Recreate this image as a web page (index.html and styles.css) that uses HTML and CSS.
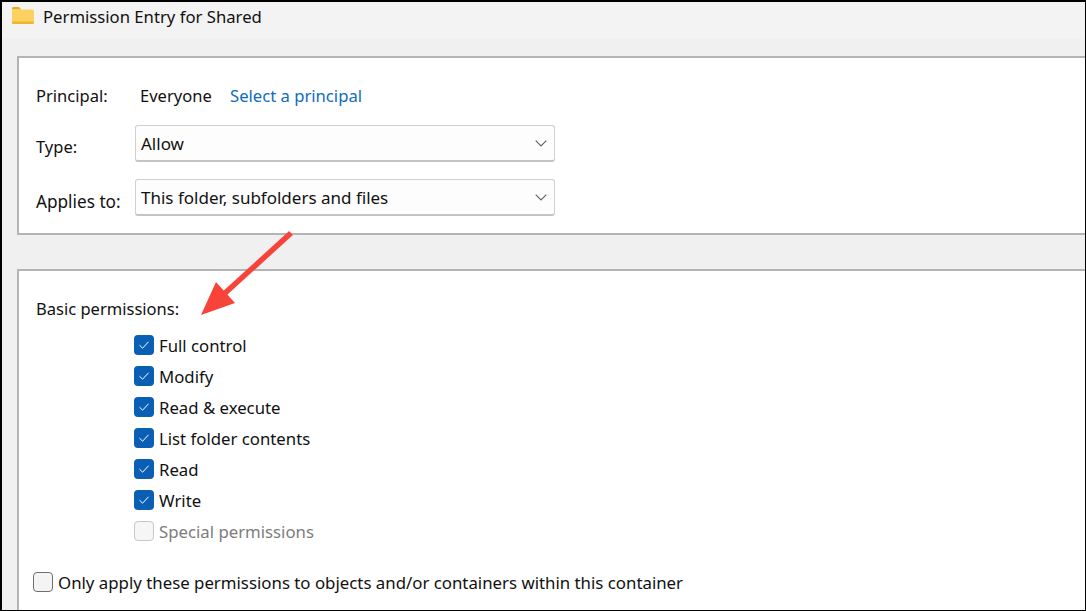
FILE: index.html
```html
<!DOCTYPE html>
<html lang="en">
<head>
<meta charset="utf-8">
<title>Permission Entry for Shared</title>
<link rel="stylesheet" href="styles.css">
</head>
<body>
<div class="window">
  <header class="titlebar">
    <svg class="folder" width="22" height="17" viewBox="0 0 22 17">
      <path d="M0 1.6C0 .7.7 0 1.6 0h4.6c.6 0 1 .2 1.3.6L9.2 2.4H0z" fill="#e8a917"/>
      <path d="M0 2.6h20.5c.8 0 1.5.7 1.5 1.5v11.3c0 .9-.7 1.6-1.5 1.6H1.5C.7 17 0 16.3 0 15.4z" fill="#fbd262"/>
      <path d="M0 14.6h22v.8c0 .9-.7 1.6-1.5 1.6H1.5C.7 17 0 16.3 0 15.4z" fill="#efb52e"/>
    </svg>
    <span class="title">Permission Entry for Shared</span>
  </header>
  <main class="content">
    <section class="panel top-panel">
      <div class="principal-row">
        <span class="label principal-label">Principal:</span>
        <span class="everyone">Everyone</span>
        <a class="link">Select a principal</a>
      </div>
      <div class="field-row type-row">
        <span class="label">Type:</span>
        <div class="select">
          <span>Allow</span>
          <svg width="12" height="7" viewBox="0 0 12 7"><path d="M.7.7 6 6l5.3-5.3" fill="none" stroke="#606060" stroke-width="1.1"/></svg>
        </div>
      </div>
      <div class="field-row applies-row">
        <span class="label">Applies to:</span>
        <div class="select">
          <span>This folder, subfolders and files</span>
          <svg width="12" height="7" viewBox="0 0 12 7"><path d="M.7.7 6 6l5.3-5.3" fill="none" stroke="#606060" stroke-width="1.1"/></svg>
        </div>
      </div>
    </section>
    <section class="panel bottom-panel">
      <div class="label basic-label">Basic permissions:</div>
      <ul class="perm-list">
        <li class="perm"><span class="box checked"><svg width="12" height="10" viewBox="0 0 12 10"><path d="M1.5 5.2 4.6 8.2 10.5 1.8" fill="none" stroke="#fff" stroke-width="1"/></svg></span>Full control</li>
        <li class="perm"><span class="box checked"><svg width="12" height="10" viewBox="0 0 12 10"><path d="M1.5 5.2 4.6 8.2 10.5 1.8" fill="none" stroke="#fff" stroke-width="1"/></svg></span>Modify</li>
        <li class="perm"><span class="box checked"><svg width="12" height="10" viewBox="0 0 12 10"><path d="M1.5 5.2 4.6 8.2 10.5 1.8" fill="none" stroke="#fff" stroke-width="1"/></svg></span>Read &amp; execute</li>
        <li class="perm"><span class="box checked"><svg width="12" height="10" viewBox="0 0 12 10"><path d="M1.5 5.2 4.6 8.2 10.5 1.8" fill="none" stroke="#fff" stroke-width="1"/></svg></span>List folder contents</li>
        <li class="perm"><span class="box checked"><svg width="12" height="10" viewBox="0 0 12 10"><path d="M1.5 5.2 4.6 8.2 10.5 1.8" fill="none" stroke="#fff" stroke-width="1"/></svg></span>Read</li>
        <li class="perm"><span class="box checked"><svg width="12" height="10" viewBox="0 0 12 10"><path d="M1.5 5.2 4.6 8.2 10.5 1.8" fill="none" stroke="#fff" stroke-width="1"/></svg></span>Write</li>
        <li class="perm disabled"><span class="box off"></span>Special permissions</li>
      </ul>
      <div class="only-row"><span class="box empty"></span>Only apply these permissions to objects and/or containers within this container</div>
    </section>
  </main>
  <svg class="arrow" width="100" height="90" viewBox="195 228 100 90">
    <path d="M291 233 224 294" fill="none" stroke="#f7433a" stroke-width="5.5"/>
    <path d="M201 315 216 282 235 303z" fill="#f7433a"/>
  </svg>
</div>
</body>
</html>
```
FILE: styles.css
```css
* { box-sizing: border-box; }
html, body { margin: 0; padding: 0; }
body {
  width: 1086px;
  height: 611px;
  overflow: hidden;
  background: #000;
  font-family: "Noto Sans", "Open Sans", sans-serif;
  font-size: 16.55px;
  color: #111;
}
.window {
  position: relative;
  width: 1083px;
  height: 608px;
  margin: 2px 0 0 2px;
  background: #f0f0f0;
  display: flex;
  flex-direction: column;
  overflow: hidden;
}
.titlebar {
  height: 37px;
  flex: none;
  background: #f3f3f3;
  display: flex;
  align-items: center;
  padding: 0 0 9px 10px;
}
.folder { margin: 0 9px 1px 0; }
.title { font-size: 16.7px; }
.content {
  flex: 1;
  padding: 17px 0 0 15px;
  display: flex;
  flex-direction: column;
  gap: 34px;
}
.panel {
  background: #fff;
  border: 2px solid #b4b4b4;
  border-right: 0;
}
.top-panel {
  height: 179px;
  padding: 25px 0 0 17px;
}
.bottom-panel {
  flex: 1;
  border-bottom: 0;
  padding: 26px 0 0 17px;
}
.principal-row { display: flex; align-items: center; height: 24px; }
.principal-label { width: 104px; }
.everyone { width: 90px; }
.link { color: #0f6cbd; font-size: 16.65px; }
.field-row { display: flex; align-items: center; }
.field-row .label { width: 99px; }
.type-row { margin-top: 18px; }
.applies-row { margin-top: 17px; }
.type-row .label { position: relative; top: 3px; }
.applies-row .label { position: relative; top: 4px; font-size: 17.2px; }
.select {
  width: 420px;
  height: 37px;
  background: #fdfdfd;
  border: 1px solid #d0d0d0;
  border-bottom: 2px solid #c4c4c4;
  border-radius: 3px;
  padding: 0 7px 0 5px;
  display: flex;
  align-items: center;
  justify-content: space-between;
  font-size: 17px;
}
.basic-label { height: 24px; line-height: 24px; }
.perm-list {
  list-style: none;
  margin: 14px 0 0 98px;
  padding: 0;
  display: flex;
  flex-direction: column;
  gap: 11px;
  font-size: 16.75px;
}
.perm { display: flex; align-items: center; height: 20px; gap: 5px; }
.box {
  width: 20px;
  height: 20px;
  flex: none;
  border-radius: 4px;
  display: flex;
  align-items: center;
  justify-content: center;
}
.checked { background: #0a5fb4; }
.off { background: #f6f6f6; border: 1px solid #c8c8c8; }
.empty { background: #f4f4f4; border: 1px solid #6e6e6e; }
.disabled { color: #7d7d7d; }
.only-row {
  display: flex;
  align-items: center;
  gap: 5px;
  height: 20px;
  margin: 31px 0 0 -3px;
  font-size: 16.82px;
}
.arrow {
  position: absolute;
  left: 193px;
  top: 226px;
}
```
